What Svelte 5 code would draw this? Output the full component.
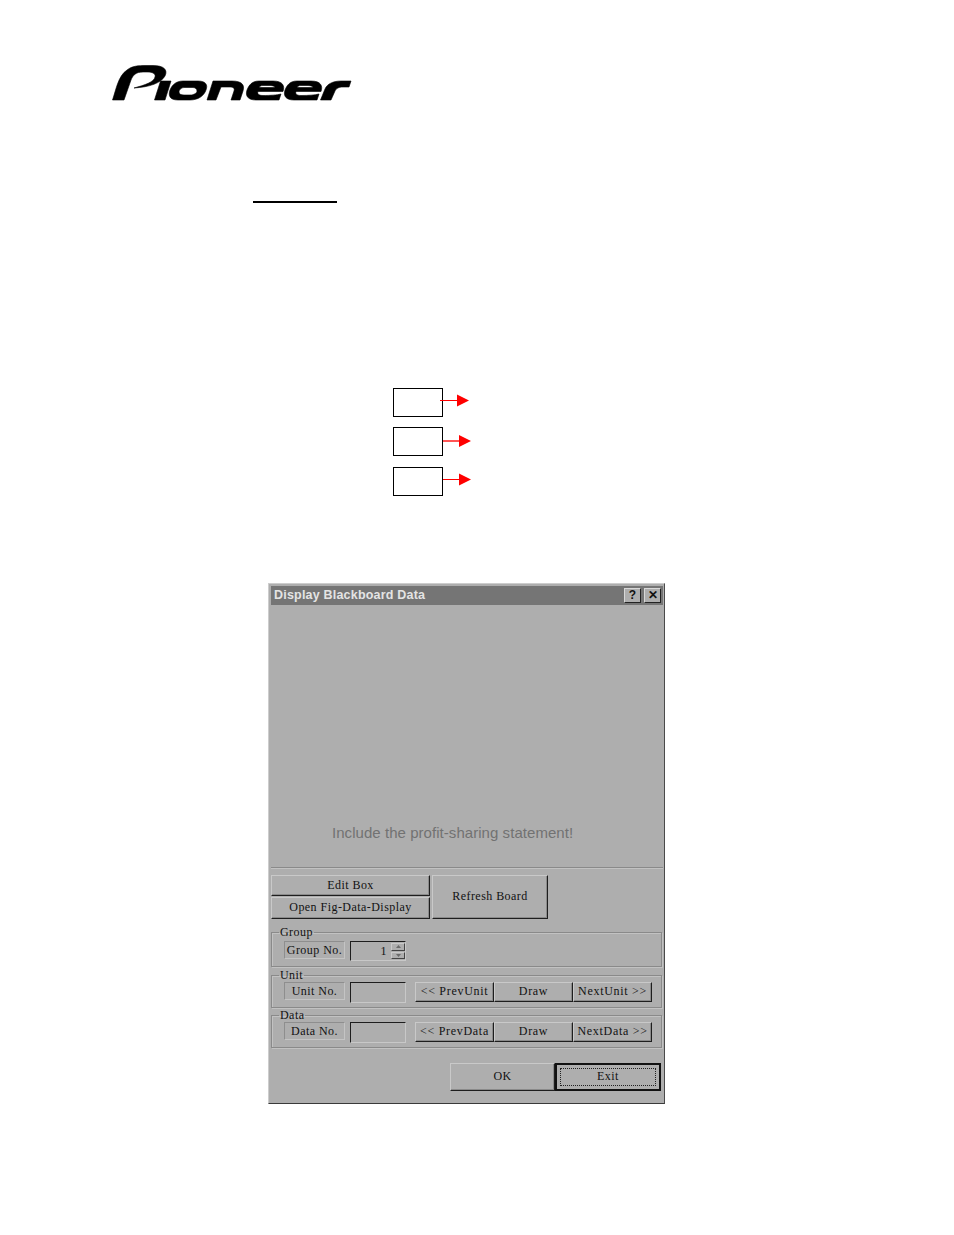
<script>
	const arrows = [
		{ head: 17, y: 12.5, width: 1, color: '#f00', overlap: true },
		{ head: 16, y: 14, width: 2, color: '#f55', overlap: false },
		{ head: 16, y: 12.5, width: 1, color: '#f00', overlap: false }
	];
	const groups = [
		{ title: 'Unit', label: 'Unit No.', prev: '<< PrevUnit', next: 'NextUnit >>' },
		{ title: 'Data', label: 'Data No.', prev: '<< PrevData', next: 'NextData >>' }
	];
	const logoE =
		'M259 81 H273 C283 81 285 86 283 91.500 H258 C257 94 259 95.500 263 95.500 C270 95.500 277 95 281 94 L279 100 H256 C248 100 245 96 247 90 C249 85 252 81 259 81 Z M259 87.500 H275 C275 86.500 273 85.500 270 85.500 H263 C261 85.500 260 86 259 87.500 Z';
</script>

<div class="page">
	<!-- logo -->
	<svg class="logo" viewBox="112 64 240 38" width="240" height="38" aria-label="Pioneer">
		<path d="M112.500 100 C116 90 118 76 127 70 C132 66 138 65.500 146 65.500 H153 C164 65.500 168 70 165 76 C161 83 150 87 134 88 C145 85 154 82 155 77 C156 74 153 72 147 72 H143 C136 72 133 75 131 80 L124 100 Z" />
		<path d="M160.500 81 H171 L165 100 H154.500 Z" />
		<path fill-rule="evenodd" d="M183 81 H198 C206 81 208 85 206 90 C204 96 198 100 190 100 H178 C170 100 168 96 170 90 C172 85 176 81 183 81 Z M184 87.500 C181 87.500 179 90 179 92 C179 94 181 95 184 95 H190 C194 95 197 93 197 91 C197 89 195 87.500 193 87.500 Z" />
		<path d="M207 100 L213 81 H232 C242 81 245 85 243 91 L240 100 H231 L234 91 C235 88 233 87 230 87 H221 L216 100 Z" />
		{#each [0, 38] as dx}
			<path fill-rule="evenodd" transform="translate({dx} 0)" d={logoE} />
		{/each}
		<path d="M320.500 100 L325 89 C327 84 333 81 341 81 H351 L349 87 H343 C338 87 336 89 335 91 L331 100 Z" />
	</svg>

	<div class="rule"></div>

	<!-- flow boxes -->
	<div class="flow">
		{#each arrows as a}
			<div class="flow-row">
				<div class="box"></div>
				<svg class="arrow" class:overlap={a.overlap} width="30" height="29" viewBox="0 0 30 29">
					<line x1="0" y1={a.y} x2={a.head + 1} y2={a.y} stroke={a.color} stroke-width={a.width} />
					<polygon points="{a.head},{a.y - 6} {a.head + 12},{a.y} {a.head},{a.y + 6}" fill="#f00" />
				</svg>
			</div>
		{/each}
	</div>

	<!-- dialog -->
	<div class="dialog">
		<div class="titlebar">
			<span class="title">Display Blackboard Data</span>
			<div class="title-btns">
				<button class="tb">?</button>
				<button class="tb">✕</button>
			</div>
		</div>

		<div class="canvas">
			<p class="statement">Include the profit-sharing statement!</p>
		</div>

		<div class="top-buttons">
			<div class="stack">
				<button class="btn edit">Edit Box</button>
				<button class="btn open">Open Fig-Data-Display</button>
			</div>
			<button class="btn refresh">Refresh Board</button>
		</div>

		<fieldset class="group first">
			<legend>Group</legend>
			<div class="row">
				<div class="label">Group No.</div>
				<div class="input spin">
					<span class="val">1</span>
					<span class="spinner">
						<i><svg width="5" height="3" viewBox="0 0 5 3"><path d="M2.500 0 L5 3 H0 Z" /></svg></i>
						<i><svg width="5" height="3" viewBox="0 0 5 3"><path d="M0 0 H5 L2.500 3 Z" /></svg></i>
					</span>
				</div>
			</div>
		</fieldset>

		{#each groups as g}
			<fieldset class="group">
				<legend>{g.title}</legend>
				<div class="row">
					<div class="label">{g.label}</div>
					<div class="input"></div>
					<button class="btn nav">{g.prev}</button>
					<button class="btn nav">Draw</button>
					<button class="btn nav">{g.next}</button>
				</div>
			</fieldset>
		{/each}

		<div class="footer">
			<button class="btn big">OK</button>
			<button class="btn big exit"><span>Exit</span></button>
		</div>
	</div>
</div>

<style>
	:global(body) {
		background: #fff;
	}

	.page {
		width: 954px;
		height: 1235px;
		padding-top: 64px;
		box-sizing: border-box;
		overflow: hidden;
	}

	.logo {
		display: block;
		margin-left: 112px;
		fill: #000;
		stroke: #000;
		stroke-width: 0.6;
	}

	.rule {
		width: 84px;
		height: 2px;
		margin: 99px 0 0 253px;
		background: #000;
	}

	.flow {
		display: flex;
		flex-direction: column;
		gap: 10px;
		margin: 185px 0 0 393px;
	}

	.flow-row {
		display: flex;
	}

	.flow-row:last-child {
		margin-top: 1px;
	}

	.box {
		width: 50px;
		height: 29px;
		box-sizing: border-box;
		border: 1px solid #000;
	}

	.arrow.overlap {
		margin-left: -3px;
	}

	.dialog {
		display: flex;
		flex-direction: column;
		width: 397px;
		height: 521px;
		box-sizing: border-box;
		margin: 87px 0 0 268px;
		padding: 2px 1px 2px 2px;
		background: #aeaeae;
		border: 1px solid;
		border-color: #cdcdcd #4a4a4a #3a3a3a #cdcdcd;
		font: 12px/14px 'Liberation Serif', serif;
		letter-spacing: 0.45px;
		color: #111;
	}

	.titlebar {
		display: flex;
		align-items: center;
		justify-content: space-between;
		height: 19px;
		padding: 0 2px 1px 3px;
		box-sizing: border-box;
		background: #757575;
		flex: none;
	}

	.title {
		font: bold 12.500px 'Liberation Sans', sans-serif;
		letter-spacing: 0.2px;
		color: #e4e4e4;
	}

	.title-btns {
		display: flex;
		gap: 3px;
	}

	.tb {
		width: 17px;
		height: 15px;
		padding: 0;
		background: #aeaeae;
		border: 1px solid;
		border-color: #d8d8d8 #222 #222 #d8d8d8;
		font: bold 12px/13px 'Liberation Sans', sans-serif;
		color: #111;
	}

	.canvas {
		display: flex;
		flex-direction: column;
		justify-content: flex-end;
		height: 263px;
		box-sizing: border-box;
		padding: 0 0 26px 61px;
		border-bottom: 1px solid #8a8a8a;
		box-shadow: 0 1px 0 #c2c2c2;
		flex: none;
	}

	.statement {
		margin: 0;
		font: 15px/16px 'Liberation Sans', sans-serif;
		letter-spacing: 0.05px;
		color: #727272;
	}

	.btn {
		padding: 0 0 2px;
		background: #aeaeae;
		border: 1px solid;
		border-color: #c9c9c9 #1e1e1e #1e1e1e #c9c9c9;
		box-shadow: inset -1px -1px 0 #8a8a8a;
		font: inherit;
		letter-spacing: inherit;
		color: inherit;
	}

	.top-buttons {
		display: flex;
		gap: 2px;
		margin-top: 7px;
		flex: none;
	}

	.stack {
		display: flex;
		flex-direction: column;
		gap: 1px;
		width: 159px;
	}

	.edit {
		height: 21px;
	}

	.open {
		height: 22px;
	}

	.refresh {
		width: 116px;
	}

	/* fieldset box starts half a legend above its visible top line */
	.group {
		min-width: 0;
		height: 39px;
		margin: 1px 1px 0 0;
		padding: 1px 3px 0 12px;
		box-sizing: border-box;
		border: 1px solid #8a8a8a;
		box-shadow: 1px 1px 0 #c2c2c2, inset 1px 1px 0 #c2c2c2;
		flex: none;
	}

	.group.first {
		height: 41px;
		margin-top: 7px;
		padding-top: 3px;
	}

	.group.first + .group {
		margin-top: 2px;
	}

	legend {
		padding: 0 1px;
		margin-left: -5px;
		line-height: 12px;
	}

	.row {
		display: flex;
		align-items: flex-start;
	}

	.label {
		width: 61px;
		height: 18px;
		box-sizing: border-box;
		margin-right: 5px;
		border: 1px solid;
		border-color: #8e8e8e #c4c4c4 #c4c4c4 #8e8e8e;
		text-align: center;
		line-height: 17px;
	}

	.input {
		width: 56px;
		height: 21px;
		box-sizing: border-box;
		margin-right: 9px;
		border: 1px solid;
		border-color: #1e1e1e #c8c8c8 #c8c8c8 #1e1e1e;
	}

	.spin {
		display: flex;
		justify-content: flex-end;
		align-items: center;
		height: 20px;
	}

	.val {
		margin-right: 4px;
	}

	.spinner {
		display: flex;
		flex-direction: column;
		gap: 1px;
		height: 16px;
		width: 14px;
	}

	.spinner i {
		display: flex;
		align-items: center;
		justify-content: center;
		flex: 1;
		background: #aeaeae;
		border: 1px solid;
		border-color: #c9c9c9 #444 #444 #c9c9c9;
	}

	.spinner path {
		fill: #6a6a6a;
	}

	.nav {
		width: 79px;
		height: 20px;
		line-height: 16px;
		letter-spacing: 0.7px;
	}

	.footer {
		display: flex;
		justify-content: flex-end;
		margin: 15px 2px 0 0;
		flex: none;
	}

	.big {
		width: 105px;
		height: 28px;
		padding-bottom: 3px;
	}

	.exit {
		width: 106px;
		padding: 3px;
		border: 2px solid #111;
		box-shadow: none;
	}

	.exit span {
		display: block;
		height: 100%;
		box-sizing: border-box;
		border: 1px dotted #222;
		line-height: 14px;
	}
</style>
